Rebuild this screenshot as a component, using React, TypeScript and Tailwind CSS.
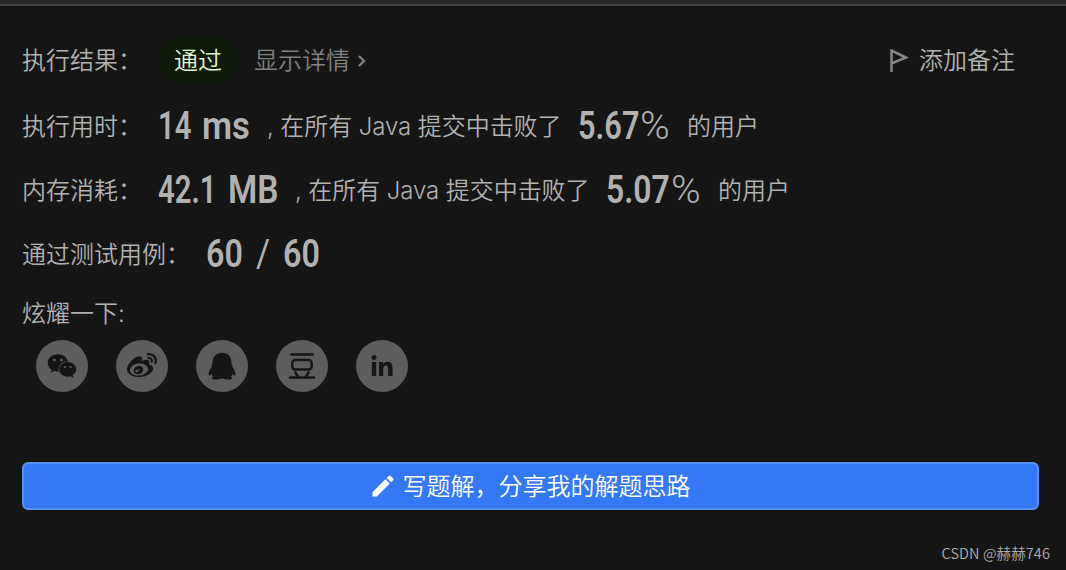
import { ReactNode, SVGProps } from "react"
import { FaLinkedinIn, FaWeibo, FaWeixin } from "react-icons/fa"
import { MdEdit } from "react-icons/md"

export default function App() {
  return (
    <div className="flex h-[570px] w-full flex-col overflow-hidden bg-[#151515] font-['Inter','Noto_Sans_CJK_SC',sans-serif] text-2xl leading-9 font-[350] text-[#b1b1b1]">
      <div className="h-1.5 shrink-0 border-b-2 border-[#444] bg-[#282828]" />
      <div className="flex flex-1 flex-col pr-[27px] pl-[22px]">
        <div className="mt-[30px] flex h-12 items-center">
          <span className="w-[120px] pt-0.5 whitespace-nowrap">执行结果：</span>
          <span className="ml-4 flex h-12 w-20 items-center justify-center rounded-full bg-[#101a0a] pt-0.5 text-[#e0f5ca]">
            通过
          </span>
          <a className="ml-4 flex items-center pt-0.5 text-[#808080]" href="#">
            显示详情
            <ChevronIcon className="ml-1.5 h-3.5 w-3" />
          </a>
          <button className="mr-6 ml-auto flex items-center pt-0.5">
            <FlagIcon className="mr-2.5 h-6 w-5 text-[#858585]" />
            添加备注
          </button>
        </div>

        <div className="mt-2.5 flex h-16 items-center">
          <span className="w-[136px] pt-0.5 whitespace-nowrap">执行用时：</span>
          <Value className="w-[44px] scale-x-[0.77]">14</Value>
          <Value className="w-[65px] scale-x-[0.91]">ms</Value>
          <Beats />
          <Value className="w-[62px] scale-x-[0.81]">5.67</Value>
          <Percent />
          <span className="pt-0.5">的用户</span>
        </div>
        <div className="flex h-16 items-center">
          <span className="w-[136px] pt-0.5 whitespace-nowrap">内存消耗：</span>
          <Value className="w-[70px] scale-x-[0.77]">42.1</Value>
          <Value className="w-[67px] scale-x-[0.88]">MB</Value>
          <Beats />
          <Value className="w-[65px] scale-x-[0.84]">5.07</Value>
          <Percent />
          <span className="pt-0.5">的用户</span>
        </div>
        <div className="flex h-16 items-center">
          <span className="w-[184px] pt-0.5 whitespace-nowrap">通过测试用例：</span>
          <Value className="w-[50px] scale-x-[0.85]">60</Value>
          <span className="w-[27px] origin-left scale-x-[0.9] font-['Roboto'] text-[38px] font-normal">
            /
          </span>
          <Value className="w-[50px] scale-x-[0.85]">60</Value>
        </div>

        <div className="mt-2.5">炫耀一下:</div>
        <div className="mt-2 ml-3.5 flex gap-7">
          <Share>
            <FaWeixin className="h-8 w-[30px]" />
          </Share>
          <Share>
            <FaWeibo className="h-[30px] w-[30px]" />
          </Share>
          <Share>
            <PenguinIcon className="h-7 w-7" />
          </Share>
          <Share>
            <DoubanIcon className="h-7 w-7" />
          </Share>
          <Share>
            <FaLinkedinIn className="mt-0.5 h-6 w-6" />
          </Share>
        </div>

        <button className="mt-[70px] flex h-12 items-center justify-center rounded-md border-2 border-[#5690f5] bg-[#3478f6] pr-0.5 text-white">
          <MdEdit className="mr-1.5 h-7 w-7" />
          <span className="pt-0.5">写题解，分享我的解题思路</span>
        </button>
        <div className="mt-auto -mr-[11px] mb-[5px] self-end font-['Noto_Sans_CJK_SC',sans-serif] text-[14.5px] leading-6 tracking-[0.1px] text-[#b0b0b0]">
          CSDN @赫赫746
        </div>
      </div>
    </div>
  )
}

function Value({ className, children }: { className: string; children: ReactNode }) {
  return (
    <span
      className={`${className} origin-left font-['Roboto'] text-[38px] font-semibold whitespace-nowrap`}
    >
      {children}
    </span>
  )
}

function Percent() {
  return (
    <span className="w-[47px] origin-left scale-x-[1.06] font-['Roboto'] text-[38px] font-[350]">
      %
    </span>
  )
}

function Beats() {
  return (
    <span className="w-[311px] pt-0.5 tracking-[-0.08px] whitespace-nowrap">
      , 在所有 Java 提交中击败了
    </span>
  )
}

function Share({ children }: { children: ReactNode }) {
  return (
    <a
      className="flex h-[52px] w-[52px] items-center justify-center rounded-full bg-[#5d5d5d] text-[#151515]"
      href="#"
    >
      {children}
    </a>
  )
}

function ChevronIcon(props: SVGProps<SVGSVGElement>) {
  return (
    <svg {...props} viewBox="0 0 12 14" fill="none" stroke="currentColor" strokeWidth="2.4">
      <path d="m3 2 5 5-5 5" />
    </svg>
  )
}

function FlagIcon(props: SVGProps<SVGSVGElement>) {
  return (
    <svg {...props} viewBox="0 0 20 24" fill="none" stroke="currentColor" strokeWidth="2.5">
      <path d="M2.5 23V1.500l14.500 7-14.500 6" />
    </svg>
  )
}

function PenguinIcon(props: SVGProps<SVGSVGElement>) {
  return (
    <svg {...props} viewBox="0 0 28 28" fill="currentColor">
      <path d="M14 .8C8.300.8 4.600 4.800 4.600 9.800c0 1.200-.1 1.700-.5 2.500-.4.900-.6 1.600-.5 2.600C2 17 .6 19.600.6 21.800c0 1.200.4 1.700 1 1.600.7-.1 1.300-.7 1.800-1.500.4 1.200 1.100 2.100 1.900 2.900-1 .3-1.500.8-1.500 1.400 0 1 1.700 1.200 4 1.200 2.500 0 4.100-.4 5-1h2.400c.9.600 2.500 1 5 1 2.300 0 4-.2 4-1.200 0-.6-.5-1.100-1.500-1.400.8-.8 1.500-1.700 1.900-2.900.5.8 1.100 1.400 1.800 1.500.6.1 1-.4 1-1.600 0-2.200-1.400-4.800-3-6.900.1-1-.1-1.700-.5-2.600-.4-.8-.5-1.300-.5-2.500 0-5-3.700-9-9.400-9Z" />
    </svg>
  )
}

function DoubanIcon(props: SVGProps<SVGSVGElement>) {
  return (
    <svg
      {...props}
      viewBox="0 0 28 28"
      fill="none"
      stroke="currentColor"
      strokeWidth="2.5"
      strokeLinecap="round"
    >
      <path d="M3.500 2.500h21M2 25.500h24" />
      <rect x="4.300" y="8" width="19.400" height="9.500" rx="3" />
      <path d="M7.500 20.500c.6 1.600 1.500 3 2.800 4.200M20.500 20.500c-.6 1.600-1.500 3-2.800 4.200" />
    </svg>
  )
}
